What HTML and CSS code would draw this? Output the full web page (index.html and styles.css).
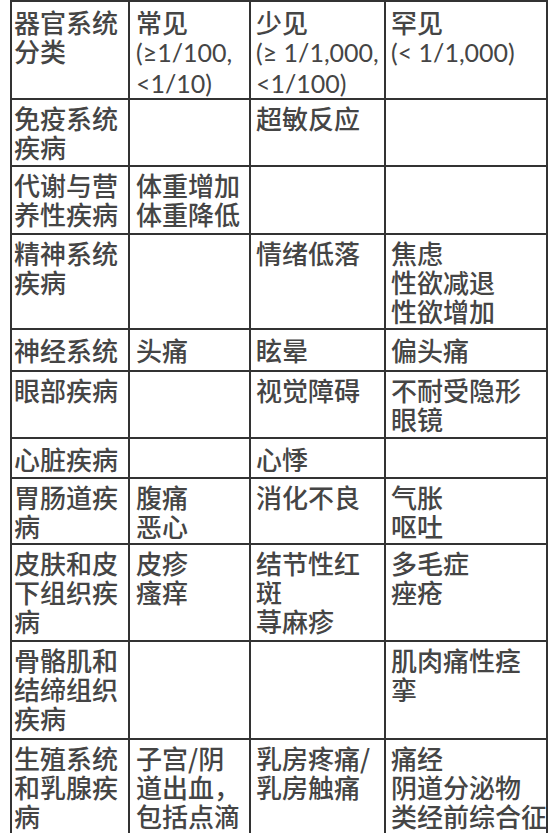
FILE: index.html
```html
<!DOCTYPE html>
<html lang="zh-CN">
<head>
<meta charset="utf-8">
<title>不良反应表</title>
<link rel="stylesheet" href="styles.css">
</head>
<body>
<div class="sheet">
  <div class="cell c1 head">器官系统<br>分类</div>
  <div class="cell c2 head">常见<br><span class="lat">(≥1/100,</span><br><span class="lat">&lt;1/10)</span></div>
  <div class="cell c3 head">少见<br><span class="lat">(≥ 1/1,000,</span><br><span class="lat">&lt;1/100)</span></div>
  <div class="cell c4 head">罕见<br><span class="lat">(&lt; 1/1,000)</span></div>

  <div class="cell c1">免疫系统<br>疾病</div>
  <div class="cell c2"></div>
  <div class="cell c3">超敏反应</div>
  <div class="cell c4"></div>

  <div class="cell c1">代谢与营<br>养性疾病</div>
  <div class="cell c2">体重增加<br>体重降低</div>
  <div class="cell c3"></div>
  <div class="cell c4"></div>

  <div class="cell c1">精神系统<br>疾病</div>
  <div class="cell c2"></div>
  <div class="cell c3">情绪低落</div>
  <div class="cell c4">焦虑<br>性欲减退<br>性欲增加</div>

  <div class="cell c1 one">神经系统</div>
  <div class="cell c2 one">头痛</div>
  <div class="cell c3 one">眩晕</div>
  <div class="cell c4 one">偏头痛</div>

  <div class="cell c1">眼部疾病</div>
  <div class="cell c2"></div>
  <div class="cell c3">视觉障碍</div>
  <div class="cell c4">不耐受隐形<br>眼镜</div>

  <div class="cell c1 one">心脏疾病</div>
  <div class="cell c2 one"></div>
  <div class="cell c3 one">心悸</div>
  <div class="cell c4 one"></div>

  <div class="cell c1">胃肠道疾<br>病</div>
  <div class="cell c2">腹痛<br>恶心</div>
  <div class="cell c3">消化不良</div>
  <div class="cell c4">气胀<br>呕吐</div>

  <div class="cell c1">皮肤和皮<br>下组织疾<br>病</div>
  <div class="cell c2">皮疹<br>瘙痒</div>
  <div class="cell c3">结节性红<br>斑<br>荨麻疹</div>
  <div class="cell c4">多毛症<br>痤疮</div>

  <div class="cell c1">骨骼肌和<br>结缔组织<br>疾病</div>
  <div class="cell c2"></div>
  <div class="cell c3"></div>
  <div class="cell c4">肌肉痛性痉<br>挛</div>

  <div class="cell c1">生殖系统<br>和乳腺疾<br>病</div>
  <div class="cell c2">子宫/阴<br>道出血，<br>包括点滴</div>
  <div class="cell c3">乳房疼痛/<br>乳房触痛</div>
  <div class="cell c4">痛经<br>阴道分泌物<br>类经前综合征</div>
</div>
</body>
</html>
```

FILE: styles.css
```css
html, body {
  margin: 0;
  padding: 0;
  background: #ffffff;
}

body {
  overflow: hidden;
  height: 833px;
}

.sheet {
  margin-left: 10px;
  width: 538px;
  box-sizing: border-box;
  display: grid;
  grid-template-columns: 116px 119px 133px 160px;
  grid-template-rows: 96px 65px 66px 93px 40px 65px 38px 64px 95px 96px 130px;
  gap: 2px;
  padding: 2px;
  background: #333333;
  font-family: "Noto Sans CJK SC", sans-serif;
  font-size: 26px;
  font-weight: 500;
  line-height: 29px;
  color: #454545;
}

.cell {
  background: #ffffff;
  padding-top: 3px;
  white-space: nowrap;
}

.c1 { padding-left: 2px; }
.c2 { padding-left: 6px; }
.c3 { padding-left: 5px; }
.c4 { padding-left: 5px; }

.head { padding-top: 5px; }
.one { padding-top: 5px; }

.lat {
  font-family: Lato, "Liberation Sans", sans-serif;
  font-size: 25px;
  font-weight: 400;
}
```
